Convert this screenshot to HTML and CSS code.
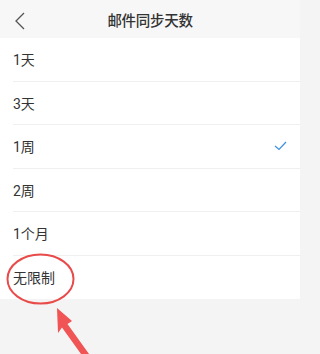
FILE: index.html
```html
<!DOCTYPE html>
<html lang="zh-CN">
<head>
<meta charset="utf-8">
<link rel="stylesheet" href="styles.css">
</head>
<body>
<div class="page">
  <header class="bar">
    <svg class="back" width="12" height="18" viewBox="0 0 12 18"><polyline points="10,1 2,9 10,17" fill="none" stroke="#555" stroke-width="1.3"/></svg>
    <div class="title">邮件同步天数</div>
  </header>
  <ul class="list">
    <li class="row"><span>1天</span></li>
    <li class="row"><span>3天</span></li>
    <li class="row"><span>1周</span>
      <svg class="check" width="13" height="10" viewBox="0 0 13 10"><polyline points="1,5 5,8.5 12,1" fill="none" stroke="#3b8fe0" stroke-width="1.2"/></svg>
    </li>
    <li class="row"><span>2周</span></li>
    <li class="row"><span>1个月</span></li>
    <li class="row"><span>无限制</span></li>
  </ul>
  <svg class="note" width="300" height="354" viewBox="0 0 300 354">
    <ellipse cx="40.5" cy="279" rx="33" ry="24.5" fill="none" stroke="#e94b4b" stroke-width="2"/>
    <polygon points="57,308 72,321 67.5,324 89,354 81,354 62,327.5 58,333" fill="#f05454"/>
  </svg>
</div>
</body>
</html>
```
FILE: styles.css
```css
html, body {
  margin: 0;
  padding: 0;
  background: #f4f4f4;
}
body {
  font-family: Roboto, "Noto Sans CJK SC", sans-serif;
  color: #333;
}
.page {
  position: relative;
  width: 300px;
  height: 354px;
  overflow: hidden;
}
.bar {
  height: 38px;
  background: #f7f7f7;
  display: flex;
  align-items: center;
  justify-content: center;
  position: relative;
}
.back {
  position: absolute;
  left: 14px;
  top: 12px;
}
.title {
  font-size: 14.5px;
  color: #333;
  font-weight: 500;
  letter-spacing: -0.3px;
}
.list {
  list-style: none;
  margin: 0;
  padding: 0;
  background: #fff;
}
.row {
  height: 43.5px;
  box-sizing: border-box;
  margin-left: 13px;
  padding-right: 13px;
  display: flex;
  align-items: center;
  justify-content: space-between;
  border-bottom: 1px solid #efefef;
  font-size: 14px;
  color: #333;
}
.row:last-child {
  border-bottom: none;
}
.note {
  position: absolute;
  left: 0;
  top: 0;
  pointer-events: none;
}
```
